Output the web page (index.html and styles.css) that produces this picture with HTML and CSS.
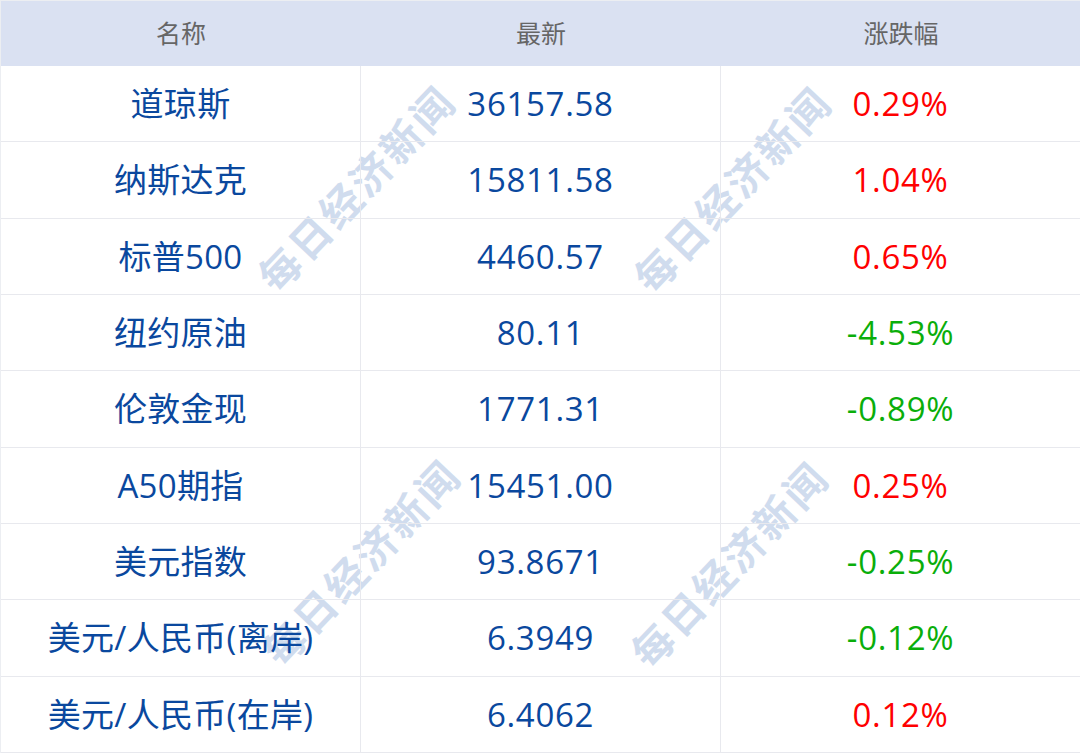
FILE: index.html
```html
<!DOCTYPE html>
<html lang="zh-CN">
<head>
<meta charset="utf-8">
<title>行情</title>
<link rel="stylesheet" href="styles.css">
</head>
<body>
<div class="board">
  <div class="grid">
    <div class="cell head">名称</div>
    <div class="cell head">最新</div>
    <div class="cell head">涨跌幅</div>

    <div class="cell name">道琼斯</div>
    <div class="cell val">36157.58</div>
    <div class="cell up">0.29%</div>

    <div class="cell name">纳斯达克</div>
    <div class="cell val">15811.58</div>
    <div class="cell up">1.04%</div>

    <div class="cell name">标普500</div>
    <div class="cell val">4460.57</div>
    <div class="cell up">0.65%</div>

    <div class="cell name">纽约原油</div>
    <div class="cell val">80.11</div>
    <div class="cell down">-4.53%</div>

    <div class="cell name">伦敦金现</div>
    <div class="cell val">1771.31</div>
    <div class="cell down">-0.89%</div>

    <div class="cell name">A50期指</div>
    <div class="cell val">15451.00</div>
    <div class="cell up">0.25%</div>

    <div class="cell name">美元指数</div>
    <div class="cell val">93.8671</div>
    <div class="cell down">-0.25%</div>

    <div class="cell name">美元/人民币(离岸)</div>
    <div class="cell val">6.3949</div>
    <div class="cell down">-0.12%</div>

    <div class="cell name">美元/人民币(在岸)</div>
    <div class="cell val">6.4062</div>
    <div class="cell up">0.12%</div>
  </div>
  <div class="marks">
    <span class="mark m1">每日经济新闻</span>
    <span class="mark m2">每日经济新闻</span>
    <span class="mark m3">每日经济新闻</span>
    <span class="mark m4">每日经济新闻</span>
  </div>
</div>
</body>
</html>
```

FILE: styles.css
```css
html, body {
  margin: 0;
  padding: 0;
  background: #ffffff;
}

.board {
  position: relative;
  width: 1080px;
  height: 753px;
  overflow: hidden;
  font-family: "Open Sans", "Noto Sans CJK SC", sans-serif;
}

.grid {
  position: relative;
  z-index: 1;
  display: grid;
  grid-template-columns: 360px 360px 360px;
  grid-template-rows: 65px repeat(9, 1fr);
  height: 753px;
  box-sizing: border-box;
  border-top: 1px solid #eceef2;
  border-left: 1px solid #eceef2;
}

.cell {
  display: flex;
  align-items: center;
  justify-content: center;
  border-right: 1px solid #e8e9ee;
  border-bottom: 1px solid #e8e9ee;
  font-size: 33px;
  line-height: 1;
  white-space: nowrap;
}

.head {
  background: #dae1f2;
  color: #666666;
  font-size: 25px;
  border-bottom: none;
  border-right: none;
}

.name,
.val {
  color: #0a489e;
}

.name {
  letter-spacing: 0.3px;
}

.val,
.up,
.down {
  letter-spacing: 0.7px;
}

.up {
  color: #ff0000;
}

.down {
  color: #0aae0a;
}

.marks {
  position: absolute;
  inset: 0;
  z-index: 0;
  pointer-events: none;
}

.mark {
  position: absolute;
  transform: translate(-50%, -50%) rotate(-46.5deg);
  font-family: "Noto Sans CJK SC", sans-serif;
  font-weight: 700;
  font-size: 41px;
  letter-spacing: 3px;
  color: #d0dcee;
  white-space: nowrap;
}

.m1 { left: 355px; top: 187px; }
.m2 { left: 731px; top: 188px; }
.m3 { left: 360px; top: 561px; }
.m4 { left: 728px; top: 563px; }
```
